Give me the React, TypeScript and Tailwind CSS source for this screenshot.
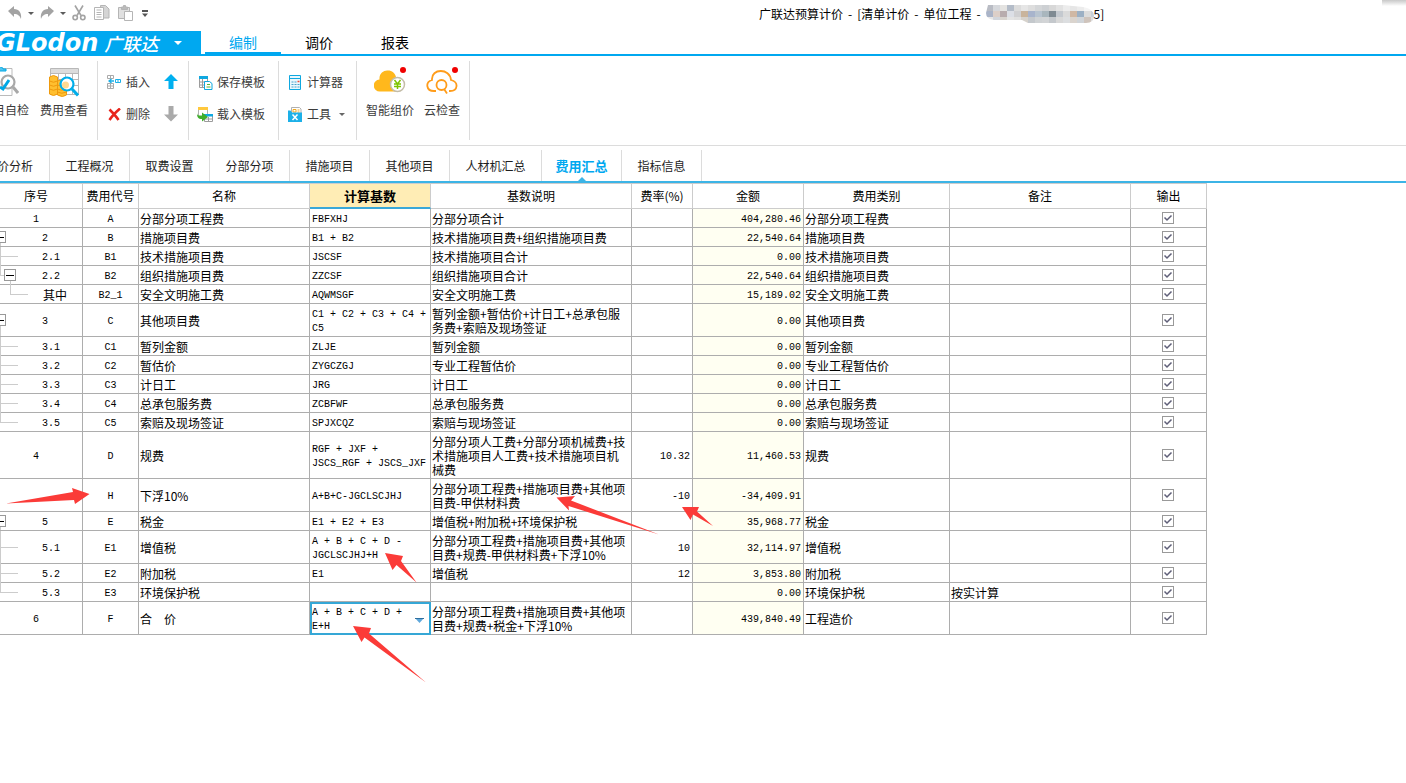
import { useState } from "react";
import type { ReactNode } from "react";
import clsx from "clsx";

interface FeeRow {
  no: string;
  code: string;
  name: string;
  base: string;
  desc: string;
  rate?: string;
  amount: string;
  category: string;
  remark?: string;
  level: "root" | "node" | "child" | "childNode" | "leaf";
  last?: boolean;
}

const ROWS: FeeRow[] = [
  { no: "1", code: "A", name: "分部分项工程费", base: "FBFXHJ", desc: "分部分项合计", amount: "404,280.46", category: "分部分项工程费", level: "root" },
  { no: "2", code: "B", name: "措施项目费", base: "B1 + B2", desc: "技术措施项目费+组织措施项目费", amount: "22,540.64", category: "措施项目费", level: "node" },
  { no: "2.1", code: "B1", name: "技术措施项目费", base: "JSCSF", desc: "技术措施项目合计", amount: "0.00", category: "技术措施项目费", level: "child" },
  { no: "2.2", code: "B2", name: "组织措施项目费", base: "ZZCSF", desc: "组织措施项目合计", amount: "22,540.64", category: "组织措施项目费", level: "childNode", last: true },
  { no: "其中", code: "B2_1", name: "安全文明施工费", base: "AQWMSGF", desc: "安全文明施工费", amount: "15,189.02", category: "安全文明施工费", level: "leaf", last: true },
  { no: "3", code: "C", name: "其他项目费", base: "C1 + C2 + C3 + C4 +\nC5", desc: "暂列金额+暂估价+计日工+总承包服\n务费+索赔及现场签证", amount: "0.00", category: "其他项目费", level: "node" },
  { no: "3.1", code: "C1", name: "暂列金额", base: "ZLJE", desc: "暂列金额", amount: "0.00", category: "暂列金额", level: "child" },
  { no: "3.2", code: "C2", name: "暂估价", base: "ZYGCZGJ", desc: "专业工程暂估价", amount: "0.00", category: "专业工程暂估价", level: "child" },
  { no: "3.3", code: "C3", name: "计日工", base: "JRG", desc: "计日工", amount: "0.00", category: "计日工", level: "child" },
  { no: "3.4", code: "C4", name: "总承包服务费", base: "ZCBFWF", desc: "总承包服务费", amount: "0.00", category: "总承包服务费", level: "child" },
  { no: "3.5", code: "C5", name: "索赔及现场签证", base: "SPJXCQZ", desc: "索赔与现场签证", amount: "0.00", category: "索赔与现场签证", level: "child", last: true },
  { no: "4", code: "D", name: "规费", base: "RGF + JXF +\nJSCS_RGF + JSCS_JXF", desc: "分部分项人工费+分部分项机械费+技\n术措施项目人工费+技术措施项目机\n械费", rate: "10.32", amount: "11,460.53", category: "规费", level: "root" },
  { no: "", code: "H", name: "下浮10%", base: "A+B+C-JGCLSCJHJ", desc: "分部分项工程费+措施项目费+其他项\n目费-甲供材料费", rate: "-10", amount: "-34,409.91", category: "", level: "root" },
  { no: "5", code: "E", name: "税金", base: "E1 + E2 + E3", desc: "增值税+附加税+环境保护税", amount: "35,968.77", category: "税金", level: "node" },
  { no: "5.1", code: "E1", name: "增值税", base: "A + B + C + D -\nJGCLSCJHJ+H", desc: "分部分项工程费+措施项目费+其他项\n目费+规费-甲供材料费+下浮10%", rate: "10", amount: "32,114.97", category: "增值税", level: "child" },
  { no: "5.2", code: "E2", name: "附加税", base: "E1", desc: "增值税", rate: "12", amount: "3,853.80", category: "附加税", level: "child" },
  { no: "5.3", code: "E3", name: "环境保护税", base: "", desc: "", amount: "0.00", category: "环境保护税", remark: "按实计算", level: "child", last: true },
  { no: "6", code: "F", name: "合　价", base: "A + B + C + D +\nE+H", desc: "分部分项工程费+措施项目费+其他项\n目费+规费+税金+下浮10%", amount: "439,840.49", category: "工程造价", level: "root" },
];

const HEADERS = ["序号", "费用代号", "名称", "计算基数", "基数说明", "费率(%)", "金额", "费用类别", "备注", "输出"];

const MENUS = ["编制", "调价", "报表"];

const TABS = ["价分析", "工程概况", "取费设置", "分部分项", "措施项目", "其他项目", "人材机汇总", "费用汇总", "指标信息"];

const NO_PADDING = {
  root: "pr-2.5",
  node: "pl-2",
  child: "pl-5",
  childNode: "pl-5",
  leaf: "pl-7",
};

// rows of the greyed-out project name
const MOSAIC = [
  ["#b9bcc4", "#d6d8dc", "#e4e3e1", "#b4bcc8", "#dcdcdc", "#e6e6e6", "#dedede", "#d4d6d8", "#cdd0d3", "#d8d8d8", "#e2e2e2", "#ececec", "#e6e6e6", "#ececec", "#f4f4f4", "#fafafa"],
  ["#aab4c8", "#dccfc8", "#b8acae", "#dcdfe6", "#d0d0d2", "#c9b49c", "#a8b4cc", "#b8c4d0", "#a9b6bd", "#7f8a92", "#c4c9cf", "#dadada", "#d0b8a4", "#9cb0c4", "#dcdcdc", "#c8d0d8"],
  ["#e8e8e8", "#d2d6dc", "#d8d4cf", "#e4e4e4", "#e0e0e0", "#d6d2cc", "#c4c8cc", "#cfd2d4", "#d2d4d6", "#c4c8cc", "#d8d8d8", "#dcdee0", "#dad4ce", "#d0d4d8", "#cfc4bc", "#dedede"],
];

function Caret({ className }: { className?: string }) {
  return (
    <svg viewBox="0 0 6 3" className={clsx("h-[3px] w-1.5", className)} fill="currentColor">
      <path d="M0 0h6L3 3z" />
    </svg>
  );
}

function QuickAccess() {
  return (
    <div className="flex items-center text-[#a3a3a3]">
      <button type="button" aria-label="撤销" className="ml-2 h-4 w-3.5">
        <svg viewBox="0 0 14 16" fill="currentColor"><path d="M0 6l6-5v3c5 0 8 4 7 10-1-3-3-5-7-5v3z" /></svg>
      </button>
      <Caret className="ml-1.5 text-[#5c5c5c]" />
      <button type="button" aria-label="恢复" className="ml-1.5 h-4 w-3.5">
        <svg viewBox="0 0 14 16" fill="currentColor"><path d="M14 6L8 1v3C3 4 0 8 1 14c1-3 3-5 7-5v3z" /></svg>
      </button>
      <Caret className="ml-1.5 text-[#5c5c5c]" />
      <button type="button" aria-label="剪切" className="ml-1.5 h-4 w-3.5">
        <svg viewBox="0 0 14 16" fill="none" stroke="currentColor" strokeWidth="1.6">
          <path d="M3 0.5l6 10M11 0.5l-6 10" />
          <circle cx="3.2" cy="12.6" r="2.2" />
          <circle cx="10.8" cy="12.6" r="2.2" />
        </svg>
      </button>
      <button type="button" aria-label="复制" className="ml-2 h-4 w-4">
        <svg viewBox="0 0 16 16" fill="#fff" stroke="#b5b5b5">
          <path d="M6.500.500h5l3.500 3.500v9h-8z" fill="#d5d5d5" />
          <path d="M.5 2.500h9v12h-9z" />
          <path d="M2.500 5h5M2.500 7.500h5M2.500 9.500h5M2.500 12h5" />
        </svg>
      </button>
      <button type="button" aria-label="粘贴" className="ml-2 h-4 w-4">
        <svg viewBox="0 0 16 16" fill="#e0e0e0" stroke="#b5b5b5">
          <path d="M.5 2.500h11v11h-11z" />
          <path d="M3.500 4.500v-2.500h2v-1.500h2v1.500h2v2.500z" fill="#bbb" />
          <path d="M6.500 6.500h8v9h-8z" fill="#fff" />
        </svg>
      </button>
      <button type="button" aria-label="自定义快速访问" className="ml-2 w-1.5 text-[#555]">
        <svg viewBox="0 0 6 7" fill="currentColor"><path d="M0 0h6v2H0zM0 3.500h6l-3 3.500z" /></svg>
      </button>
    </div>
  );
}

function TitleBar() {
  return (
    <header className="relative flex h-[31px] items-start">
      <div className="w-[759px] pt-[5px]">
        <QuickAccess />
      </div>
      <h1 className="flex items-center gap-[5px] pt-[5px] text-xs leading-[18px] whitespace-nowrap text-black">
        <span>广联达预算计价</span>
        <span>-</span>
        <span>[清单计价</span>
        <span>-</span>
        <span>单位工程</span>
        <span>-</span>
        <span className="flex items-center">
          <svg viewBox="0 0 108 18" className="h-[18px] w-[108px]">
            <clipPath id="smudge">
              <path d="M2 0h75l20 2q11 2 11 9t-8 7H42l-6-3H8Q0 14 0 8z" />
            </clipPath>
            <g clipPath="url(#smudge)">
              {MOSAIC.map((line, y) =>
                line.map((fill, x) => (
                  <rect key={`${x}-${y}`} x={x * 7} y={y * 6} width="7" height="6" fill={fill} />
                ))
              )}
            </g>
          </svg>
          5]
        </span>
      </h1>
      <div className="absolute top-0 right-0 h-1.5 w-6 bg-linear-to-b from-[#c8c8c8] to-white" />
    </header>
  );
}

function MenuBar() {
  const [active, setActive] = useState("编制");

  return (
    <nav className="flex h-[25px] items-stretch border-b-2 border-[#00a8f0]">
      <button type="button" className="flex w-[201px] items-center overflow-hidden bg-[#00a8f0] text-white">
        <span className="-ml-1 font-['DejaVu_Sans'] text-2xl leading-6 font-bold italic">GLodon</span>
        <span className="ml-1.5 text-lg leading-6 font-medium italic">广联达</span>
        <svg viewBox="0 0 8 4" className="ml-4 h-1 w-2" fill="currentColor"><path d="M0 0h8L4 4z" /></svg>
      </button>
      <div className="ml-1 flex">
        {MENUS.map((menu) => (
          <button
            key={menu}
            type="button"
            className={clsx(
              "w-[76px] border-b-2 text-sm leading-5",
              active === menu ? "border-[#00a8f0] text-[#00a8f0]" : "border-transparent text-black"
            )}
            onClick={() => setActive(menu)}
          >
            {menu}
          </button>
        ))}
      </div>
    </nav>
  );
}

function ToolGroup({ className, children }: { className?: string; children: ReactNode }) {
  return <div className={clsx("flex h-[79px] border-r border-[#dcdcdc]", className)}>{children}</div>;
}

function SmallTool({ icon, label, caret }: { icon: ReactNode; label: string; caret?: boolean }) {
  return (
    <button type="button" className="flex h-4 items-center gap-1 whitespace-nowrap">
      <span className="flex w-4 justify-center">{icon}</span>
      <span>{label}</span>
      {caret && <Caret className="ml-1 text-[#666]" />}
    </button>
  );
}

function BigTool({ icon, label, className }: { icon: ReactNode; label: string; className?: string }) {
  return (
    <button type="button" className={clsx("flex h-[51px] flex-col justify-between whitespace-nowrap", className)}>
      {icon}
      <span className="leading-4">{label}</span>
    </button>
  );
}

function Toolbar() {
  return (
    <div className="flex h-[90px] items-start border-b border-[#dcdcdc] pt-[5px] text-xs text-[#3c3c3c]">
      <ToolGroup className="w-[98px] gap-[11px] pt-1.5">
        <BigTool
          label="目自检"
          className="w-[29px] items-end"
          icon={
            <svg viewBox="0 0 30 30" className="mr-2.5 h-[30px] w-[30px] shrink-0" fill="none">
              <path d="M1 1.500h22v27H1z" stroke="#bbb" fill="#fff" />
              <path d="M5 4V2h3c0-3 6-3 6 0h3v2z" fill="#4fc4ee" stroke="#00a8e6" />
              <circle cx="19" cy="15" r="6.500" stroke="#a8a8a8" strokeWidth="2.200" fill="#fff" />
              <path d="M24 20l5 6" stroke="#a8a8a8" strokeWidth="3" />
              <path d="M11 20l3 2 6-9" stroke="#00a8e6" strokeWidth="3" />
            </svg>
          }
        />
        <BigTool
          label="费用查看"
          className="items-center"
          icon={
            <svg viewBox="0 0 30 30" className="h-[30px] w-[30px]" fill="none">
              <path d="M1.500 1.500h28v26h-28z" fill="#fff" stroke="#b8b8b8" />
              <path d="M2 2h27v4H2z" fill="#dcdcdc" />
              <path d="M2 6.500h27M2 12.500h27M2 18.500h27M9.500 7v20M16.500 7v20M23.500 7v20" stroke="#b8b8b8" />
              <path d="M.5 10q4-3 8 0v17q-4 3-8 0zM8.500 14q5-3 9 0v14q-4 3-9 0z" fill="#ffbf2f" stroke="#ef9a0d" />
              <path d="M.5 14q4 2.500 8 0M.5 18q4 2.500 8 0M.5 22q4 2.500 8 0M8.500 18q4 2.500 9 0M8.500 22q4 2.500 9 0M8.500 25q4 2.500 9 0" stroke="#ef9a0d" />
              <circle cx="18" cy="17" r="6.500" stroke="#00aeea" strokeWidth="2.200" fill="#fff" />
              <circle cx="16.500" cy="18" r="3.500" fill="#ffd992" />
              <path d="M23 22l6 6.500" stroke="#00aeea" strokeWidth="3" />
            </svg>
          }
        />
      </ToolGroup>

      <ToolGroup className="w-[91px] gap-3.5 pl-2">
        <div className="flex flex-col gap-4 pt-[13px]">
          <SmallTool
            label="插入"
            icon={
              <svg viewBox="0 0 14 16" className="h-4 w-3.5" fill="none">
                <path d="M.5 1.500h6v3h-6zM.5 9.500h6v5h-6zM3.500 1.500v3M3.500 9.500v5M.5 12h6" stroke="#aaa" />
                <path d="M8.500 5.500h5v3h-5zM11 5.500v3" stroke="#1cb0e8" />
                <path d="M2 7h5M4.500 5L2 7l2.500 2" stroke="#1cb0e8" strokeWidth="1.300" />
              </svg>
            }
          />
          <SmallTool
            label="删除"
            icon={
              <svg viewBox="0 0 13 13" className="h-[13px] w-[13px]" fill="none">
                <path d="M1.500 1.500C4 4 8 8 10.500 12M12 .5C8 4 4 8 1.500 12" stroke="#e8251c" strokeWidth="2.600" />
              </svg>
            }
          />
        </div>
        <div className="flex flex-col gap-4 pt-[13px]">
          <button type="button" aria-label="上移" className="text-[#00b0f0]">
            <svg viewBox="0 0 14 16" className="h-4 w-3.5" fill="currentColor"><path d="M7 0l7 7h-4.500v8h-5V7H0z" /></svg>
          </button>
          <button type="button" aria-label="下移" className="text-[#aaa]">
            <svg viewBox="0 0 14 16" className="h-4 w-3.5" fill="currentColor"><path d="M7 15.500L0 8.500h4.500V0h5v8.500H14z" /></svg>
          </button>
        </div>
      </ToolGroup>

      <ToolGroup className="w-[90px] pl-2">
        <div className="flex flex-col gap-4 pt-[13px]">
          <SmallTool
            label="保存模板"
            icon={
              <svg viewBox="0 0 15 15" className="h-[15px] w-[15px]" fill="none">
                <path d="M1.500 1.500h8v11h-8z" fill="#fff" stroke="#9c9c9c" />
                <path d="M1 1h9v3H1z" fill="#0fa8e0" />
                <path d="M1.500 7h8M1.500 10h8M4.500 4v9" stroke="#9c9c9c" />
                <path d="M6.500 6.500h5l2.500 2v6H6.500z" fill="#fff" stroke="#0fa8e0" />
                <path d="M9 9.500h3M8.500 12h4" stroke="#5cb531" />
              </svg>
            }
          />
          <SmallTool
            label="载入模板"
            icon={
              <svg viewBox="0 0 16 16" className="h-4 w-4" fill="none">
                <path d="M1.500 1.500h9v9h-9z" fill="#fff" stroke="#b0b0b0" />
                <path d="M1 1h10v3H1z" fill="#ffc83d" />
                <path d="M7.500 8.500h8v7h-8z" fill="#fff" stroke="#9c9c9c" />
                <path d="M7 8h9v2.500H7z" fill="#0fa8e0" />
                <path d="M11.500 11v4M8 13h7" stroke="#9c9c9c" />
                <path d="M0 7c0 3 2 2.500 5 2.500V6.500L11 11 5 15.500V13C1 13 0 11 0 7z" fill="#3fae2a" />
              </svg>
            }
          />
        </div>
      </ToolGroup>

      <ToolGroup className="w-[78px] pl-2">
        <div className="flex flex-col gap-4 pt-[13px]">
          <SmallTool
            label="计算器"
            icon={
              <svg viewBox="0 0 12 15" className="h-[15px] w-3" fill="none">
                <path d="M.5.500h11v14H.5z" fill="#eaf7fd" stroke="#0fa8e0" />
                <path d="M0 3.500h12" stroke="#0fa8e0" />
                <path d="M2.500 7h2M5.500 7h2M2.500 9.500h2M5.500 9.500h2M8.500 9.500h2M2.500 12h2M5.500 12h2M8.500 12h2" stroke="#4aa3cc" />
                <path d="M8.500 6.500h2" stroke="#f04a3c" strokeWidth="1.500" />
              </svg>
            }
          />
          <SmallTool
            label="工具"
            caret
            icon={
              <svg viewBox="0 0 14 15" className="h-[15px] w-3.5" fill="none">
                <path d="M3.500.500h8l1.500 1.500v6H3.500z" fill="#fff" stroke="#b0b0b0" />
                <path d="M5 2.500h3v2.500H5zM9.500 3h2M9.500 5h2" stroke="#f0a81e" />
                <path d="M0 3.500h2.500l1.500 2h10V15H0z" fill="#1cb0e8" />
                <path d="M4.500 7.500l5 5.500M9.500 7.500l-5 5.500" stroke="#fff" strokeWidth="1.500" />
              </svg>
            }
          />
        </div>
      </ToolGroup>

      <ToolGroup className="w-[113px] gap-2.5 pt-1.5 pl-[9px]">
        <BigTool
          label="智能组价"
          className="items-center"
          icon={
            <svg viewBox="0 0 32 28" className="h-7 w-8" fill="none">
              <path d="M6 24.500a6 6 0 0 1-.5-12C5 6 10 3 14 3.500c4 0 7 2.500 8 6.500 4 1 6 3 6 7s-2 7.500-6 7.500z" fill="#ffb81c" />
              <circle cx="23.500" cy="17.500" r="7" fill="#fff" stroke="#c4bda8" strokeWidth="1.500" />
              <path d="M20.500 13l3 4 3-4M23.500 17v5M20 17h7M20 19.500h7" stroke="#7dc400" strokeWidth="1.500" />
              <circle cx="29" cy="3" r="3" fill="#f00000" />
            </svg>
          }
        />
        <BigTool
          label="云检查"
          className="items-center"
          icon={
            <svg viewBox="0 0 32 28" className="h-7 w-8" fill="none" stroke="#ff9c1a" strokeWidth="1.800">
              <path d="M10 24H8c-8 0-9-9-2-11C5 1 24 1 25 13c8 2 7 11-1 11h-1" />
              <circle cx="15.500" cy="18" r="5" />
              <path d="M18 22l3 4.500" />
              <circle cx="29" cy="3" r="3" fill="#f00000" stroke="none" />
            </svg>
          }
        />
      </ToolGroup>
    </div>
  );
}

function PageTabs() {
  const [active, setActive] = useState("费用汇总");

  return (
    <nav className="flex h-[37px] items-end border-b-2 border-[#3cb4e6] text-xs">
      {TABS.map((tab, i) => (
        <button
          key={tab}
          type="button"
          className={clsx(
            "relative flex h-[31px] items-center border-r border-[#dcdcdc] whitespace-nowrap",
            i === 0 ? "w-[50px] justify-end pr-4" : "justify-center",
            i > 0 && (tab.length > 4 ? "w-[92px]" : "w-20"),
            active === tab ? "text-[13px] font-bold text-[#00a8f0]" : "text-[#1e1e1e]"
          )}
          onClick={() => setActive(tab)}
        >
          {tab}
          {active === tab && (
            <svg viewBox="0 0 8 4" className="absolute bottom-0 left-9 h-1 w-2" fill="#3cb4e6"><path d="M0 4l4-4 4 4z" /></svg>
          )}
        </button>
      ))}
    </nav>
  );
}

// connector lines and the fold button in front of the row number
function TreeGuide({ row }: { row: FeeRow }) {
  const isNode = row.level === "node";
  const isChild = row.level === "child" || row.level === "childNode";

  return (
    <>
      {isNode && <span className="absolute top-1/2 bottom-0 left-0 w-px bg-[#ccc]" />}
      {isChild && (
        <>
          <span className={clsx("absolute top-0 left-0 w-px bg-[#ccc]", row.last ? "bottom-1/2" : "-bottom-px")} />
          <span className={clsx("absolute top-1/2 left-0 h-px bg-[#ccc]", row.level === "childNode" ? "w-1" : "w-[18px]")} />
        </>
      )}
      {row.level === "childNode" && <span className="absolute top-1/2 -bottom-px left-2.5 w-px bg-[#ccc]" />}
      {row.level === "leaf" && (
        <>
          <span className="absolute top-0 bottom-1/2 left-2.5 w-px bg-[#ccc]" />
          <span className="absolute top-1/2 left-2.5 h-px w-[18px] bg-[#ccc]" />
        </>
      )}
      {(isNode || row.level === "childNode") && (
        <button
          type="button"
          aria-label={`折叠 ${row.name}`}
          className={clsx(
            "absolute top-1/2 flex h-3 w-3 -translate-y-1/2 items-center justify-center border border-[#999] bg-white",
            isNode ? "-left-1.5" : "left-1"
          )}
        >
          <span className="h-px w-2 bg-black" />
        </button>
      )}
    </>
  );
}

function OutputCheck({ name }: { name: string }) {
  return (
    <label className="mx-auto grid h-3 w-3" aria-label={`输出 ${name}`}>
      <input type="checkbox" defaultChecked className="peer col-start-1 row-start-1 h-3 w-3 appearance-none border border-[#999] bg-white" />
      <svg viewBox="0 0 12 12" className="pointer-events-none col-start-1 row-start-1 hidden h-3 w-3 peer-checked:block" fill="none" stroke="#5f5f78" strokeWidth="1.500">
        <path d="M2.500 5.500l2.500 2.500 4.500-4.500" />
      </svg>
    </label>
  );
}

function FeeTable() {
  const cell = "border-r border-b border-[#adadad]";
  const text = "pt-[3px] pr-0.5 pb-px pl-px whitespace-pre-line";
  const mono = "px-0.5 pt-1 pb-0 whitespace-pre-line font-['Liberation_Mono',monospace] text-[10px] leading-[14px]";

  return (
    <table className="w-[1207px] table-fixed border-separate border-spacing-0 border-t border-[#ccc] text-xs leading-[14px] text-black">
      <colgroup>
        <col className="w-[83px]" />
        <col className="w-14" />
        <col className="w-[171px]" />
        <col className="w-[121px]" />
        <col className="w-[201px]" />
        <col className="w-[61px]" />
        <col className="w-[111px]" />
        <col className="w-[146px]" />
        <col className="w-[181px]" />
        <col className="w-[76px]" />
      </colgroup>
      <thead>
        <tr className="h-[25px]">
          {HEADERS.map((header) => (
            <th
              key={header}
              className={clsx(
                "border-r border-[#ccc] whitespace-nowrap",
                header === "计算基数"
                  ? "border-b-2 border-b-[#3aa8d8] bg-[#ffedb5] text-[13px] font-bold"
                  : "border-b font-normal",
                header === "序号" ? "py-0 pr-2.5 pl-0" : "p-0"
              )}
            >
              {header}
            </th>
          ))}
        </tr>
      </thead>
      <tbody>
        {ROWS.map((row) => (
          <tr key={row.code}>
            <td className={clsx(cell, "relative p-0 text-center")}>
              <TreeGuide row={row} />
              <div className={row.no === "其中" ? "pt-0.5" : "pt-1 font-['Liberation_Mono',monospace] text-[10px] leading-[14px]"}>
                <div className={NO_PADDING[row.level]}>{row.no}</div>
              </div>
            </td>
            <td className={clsx(cell, mono, "text-center")}>{row.code}</td>
            <td className={clsx(cell, text)}>{row.name}</td>
            {row.code === "F" ? (
              <td className={clsx(cell, mono, "outline-2 -outline-offset-2 outline-[#35a7d6]")}>
                <div className="flex items-center">
                  <textarea
                    aria-label="计算基数"
                    rows={2}
                    defaultValue={row.base}
                    className="block h-7 w-24 resize-none overflow-hidden bg-transparent leading-[14px] outline-none"
                  />
                  <button type="button" aria-label="选择费用代码" className="ml-[7px] text-[#5fa8dc]">
                    <svg viewBox="0 0 9 5" className="h-[5px] w-[9px]" fill="currentColor">
                      <path d="M0 0h9L4.500 5z" />
                      <path d="M0 0h9v1H0z" fill="#2f6f9f" />
                    </svg>
                  </button>
                </div>
              </td>
            ) : (
              <td className={clsx(cell, mono)}>{row.base}</td>
            )}
            <td className={clsx(cell, text)}>{row.desc}</td>
            <td className={clsx(cell, mono, "text-right")}>{row.rate}</td>
            <td className={clsx(cell, mono, "bg-[#fffff2] text-right")}>{row.amount}</td>
            <td className={clsx(cell, text)}>{row.category}</td>
            <td className={clsx(cell, text)}>{row.remark}</td>
            <td className={clsx(cell, "pr-0.5")}><OutputCheck name={row.name || row.code} /></td>
          </tr>
        ))}
      </tbody>
    </table>
  );
}

// red arrows that point at the changed cells
function Annotations() {
  return (
    <svg viewBox="0 183 720 510" className="pointer-events-none absolute top-0 left-0 h-[510px] w-[720px]" fill="#fb3b38">
      <path d="M89.500 494L72 488l1 4L6 503.500l68-3.500 1 4z" />
      <path d="M556.500 497.500l18.500-1.500-4 4.500L659 534.500 568.500 506l.5 4.500z" />
      <path d="M682 507h17l-2 4.500 16 14.500-20-11.500-2.500 5.500z" />
      <path d="M385 553l18 3-2 5 15.500 21.500L396.500 565l-4 5z" />
      <path d="M353 626l18 2-2 5.500 57 49-61.500-45-3 4.500z" />
    </svg>
  );
}

export default function App() {
  return (
    <div className="min-h-screen overflow-hidden bg-white font-['Noto_Sans_CJK_SC',sans-serif]">
      <TitleBar />
      <MenuBar />
      <Toolbar />
      <PageTabs />
      <main className="relative min-h-[510px]">
        <FeeTable />
        <Annotations />
      </main>
    </div>
  );
}
